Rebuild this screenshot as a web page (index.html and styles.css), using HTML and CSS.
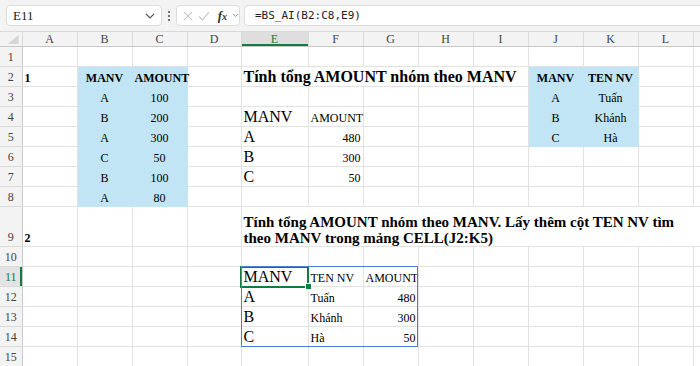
FILE: index.html
```html
<!DOCTYPE html>
<html lang="vi">
<head>
  <meta charset="UTF-8" />
  <title>BS_AI</title>
  <link rel="stylesheet" href="styles.css">
</head>
<body>

<div class="formula-bar">
  <div class="name-box">
    <span>E11</span>
    <svg class="chev" width="10" height="6" viewBox="0 0 10 6"><path d="M1 1l4 4 4-4" fill="none" stroke="#555" stroke-width="1.1"/></svg>
  </div>
  <div class="grip">
    <svg width="4" height="12" viewBox="0 0 4 12"><circle cx="2" cy="2" r="1.1" fill="#555"/><circle cx="2" cy="6" r="1.1" fill="#555"/><circle cx="2" cy="10" r="1.1" fill="#555"/></svg>
  </div>
  <div class="fx-box">
    <svg width="10" height="10" viewBox="0 0 10 10"><path d="M1 1l8 8M9 1l-8 8" stroke="#c4c4c4" stroke-width="1.1"/></svg>
    <svg width="12" height="10" viewBox="0 0 12 10"><path d="M1 5.5l3.5 3.5 6.5-8" fill="none" stroke="#c4c4c4" stroke-width="1.1"/></svg>
    <span class="fx">f<small>x</small></span>
    <svg width="7" height="5" viewBox="0 0 7 5"><path d="M1 1l2.5 2.5 2.5-2.5" fill="none" stroke="#888" stroke-width="1"/></svg>
  </div>
  <div class="formula">=BS_AI(B2:C8,E9)</div>
</div>

<table class="sheet">
  <colgroup>
    <col class="w-rh"><col class="w-c"><col class="w-c"><col class="w-c"><col class="w-d"><col class="w-e">
    <col class="w-c"><col class="w-c"><col class="w-c"><col class="w-c"><col class="w-c"><col class="w-c"><col class="w-c"><col class="w-m">
  </colgroup>
  <thead>
    <tr>
      <th class="corner"><div class="tri"></div></th>
      <th>A</th><th>B</th><th>C</th><th>D</th><th class="sel-col">E</th><th>F</th><th>G</th><th>H</th><th>I</th><th>J</th><th>K</th><th>L</th><th></th>
    </tr>
  </thead>
  <tbody>
    <tr>
      <th>1</th><td></td><td></td><td></td><td></td><td></td><td></td><td></td><td></td><td></td><td></td><td></td><td></td><td></td>
    </tr>
    <tr>
      <th>2</th><td class="bold">1</td><td class="blue bold c">MANV</td><td class="blue bold c">AMOUNT</td><td></td>
      <td colspan="5" class="title">Tính tổng AMOUNT nhóm theo MANV</td>
      <td class="blue bold c">MANV</td><td class="blue bold c">TEN NV</td><td></td><td></td>
    </tr>
    <tr>
      <th>3</th><td></td><td class="blue c">A</td><td class="blue c">100</td><td></td><td></td><td></td><td></td><td></td><td></td>
      <td class="blue c">A</td><td class="blue c">Tuấn</td><td></td><td></td>
    </tr>
    <tr>
      <th>4</th><td></td><td class="blue c">B</td><td class="blue c">200</td><td></td><td class="big">MANV</td><td>AMOUNT</td><td></td><td></td><td></td>
      <td class="blue c">B</td><td class="blue c">Khánh</td><td></td><td></td>
    </tr>
    <tr>
      <th>5</th><td></td><td class="blue c">A</td><td class="blue c">300</td><td></td><td class="big">A</td><td class="r">480</td><td></td><td></td><td></td>
      <td class="blue c">C</td><td class="blue c">Hà</td><td></td><td></td>
    </tr>
    <tr>
      <th>6</th><td></td><td class="blue c">C</td><td class="blue c">50</td><td></td><td class="big">B</td><td class="r">300</td><td></td><td></td><td></td><td></td><td></td><td></td><td></td>
    </tr>
    <tr>
      <th>7</th><td></td><td class="blue c">B</td><td class="blue c">100</td><td></td><td class="big">C</td><td class="r">50</td><td></td><td></td><td></td><td></td><td></td><td></td><td></td>
    </tr>
    <tr>
      <th>8</th><td></td><td class="blue c">A</td><td class="blue c">80</td><td></td><td></td><td></td><td></td><td></td><td></td><td></td><td></td><td></td><td></td>
    </tr>
    <tr class="tall">
      <th>9</th><td class="bold">2</td><td></td><td></td><td></td>
      <td colspan="9" class="title2">Tính tổng AMOUNT nhóm theo MANV. Lấy thêm cột TEN NV tìm<br>theo MANV trong mảng CELL(J2:K5)</td>
    </tr>
    <tr>
      <th>10</th><td></td><td></td><td></td><td></td><td></td><td></td><td></td><td></td><td></td><td></td><td></td><td></td><td></td>
    </tr>
    <tr>
      <th class="sel-row">11</th><td></td><td></td><td></td><td></td>
      <td class="big active">MANV<span class="spill"></span></td><td>TEN NV</td><td>AMOUNT</td><td></td><td></td><td></td><td></td><td></td><td></td>
    </tr>
    <tr>
      <th>12</th><td></td><td></td><td></td><td></td><td class="big">A</td><td>Tuấn</td><td class="r">480</td><td></td><td></td><td></td><td></td><td></td><td></td>
    </tr>
    <tr>
      <th>13</th><td></td><td></td><td></td><td></td><td class="big">B</td><td>Khánh</td><td class="r">300</td><td></td><td></td><td></td><td></td><td></td><td></td>
    </tr>
    <tr>
      <th>14</th><td></td><td></td><td></td><td></td><td class="big">C</td><td>Hà</td><td class="r">50</td><td></td><td></td><td></td><td></td><td></td><td></td>
    </tr>
    <tr>
      <th>15</th><td></td><td></td><td></td><td></td><td></td><td></td><td></td><td></td><td></td><td></td><td></td><td></td><td></td>
    </tr>
  </tbody>
</table>

</body>
</html>
```

FILE: styles.css
```css
body { margin: 0; background: #fff; overflow: hidden; font-family: "Liberation Serif", serif; }

/* formula bar */
.formula-bar { height: 31px; box-sizing: border-box; padding: 5px 0 5px 6px; background: #f3f3f3; display: flex; align-items: stretch; }
.name-box { width: 156px; box-sizing: border-box; background: #fff; border: 1px solid #dcdcdc; border-radius: 4px; display: flex; align-items: center; justify-content: space-between; padding: 0 6px 0 6px; font-size: 13px; color: #222; }
.grip { width: 14px; display: flex; align-items: center; justify-content: center; }
.fx-box { width: 64px; box-sizing: border-box; background: #fff; border: 1px solid #dcdcdc; border-radius: 4px; display: flex; align-items: center; gap: 5px; padding-left: 6px; }
.fx { font-style: italic; font-weight: bold; font-size: 13px; color: #333; margin-left: 3px; }
.fx small { font-size: 10px; }
.formula { flex: 1; margin-left: 4px; margin-right: -4px; background: #fff; border: 1px solid #dcdcdc; border-radius: 4px; font-family: "DejaVu Sans Mono", monospace; font-size: 11px; color: #222; padding-left: 10px; display: flex; align-items: center; }

/* grid */
.sheet { border-collapse: collapse; table-layout: fixed; width: 700px; font-family: "Liberation Serif", serif; font-size: 12px; color: #000; }
.sheet th, .sheet td { box-sizing: border-box; }
.w-rh { width: 22px; }
.w-c { width: 55px; }
.w-d { width: 54px; }
.w-e { width: 67px; }
.w-m { width: 7px; }

.sheet th { background: #f3f3f3; font-family: "Liberation Serif", serif; font-weight: normal; color: #444; font-size: 12px; padding: 0; line-height: 13px; }
.sheet thead th { height: 15px; border-top: 1px solid #dadada; border-left: 1px solid #dadada; border-right: 1px solid #dadada; border-bottom: 1px solid #c8c8c8; text-align: center; }
.sheet tbody th { height: 20px; text-align: center; vertical-align: bottom; border-right: 1px solid #c8c8c8; border-bottom: 1px solid #dadada; padding-bottom: 2px; }
.sheet thead th.corner { position: relative; border-left: none; }
.tri { position: absolute; right: 3px; bottom: 2px; width: 11px; height: 9px; background: #d6d6d6; clip-path: polygon(100% 0, 100% 100%, 0 100%); }
.sheet thead th.sel-col { background: #dedede; color: #107c41; box-shadow: inset 0 -2px #107c41; }
.sheet tbody th.sel-row { background: #e3e3e3; color: #107c41; box-shadow: inset -2px 0 #107c41; }

.sheet td { height: 20px; border: 1px solid #e2e2e2; padding: 0 2px; vertical-align: bottom; line-height: 16px; white-space: nowrap; font-family: "Liberation Serif", serif; }
.sheet tr.tall td, .sheet tr.tall th { height: 40px; }

.blue { background: #c1e5f5; border-color: #c1e5f5 !important; }
.bold { font-weight: bold; }
.c { text-align: center; }
.r { text-align: right; }
.big { font-size: 16px; line-height: 18px; padding-bottom: 1px !important; }
.title { font-size: 16px; font-weight: bold; line-height: 18px; padding-bottom: 1px !important; }
.title2 { font-size: 15px; font-weight: bold; line-height: 19px; white-space: normal !important; }

.active { position: relative; outline: 2px solid #107c41; outline-offset: -1px; }
.active::after { content: ""; position: absolute; right: -4px; bottom: -4px; width: 5px; height: 5px; background: #107c41; border: 1px solid #fff; z-index: 2; }
.spill { position: absolute; left: -1px; top: -1px; width: 177px; height: 81px; box-sizing: border-box; border: 1px solid #4a7fe0; pointer-events: none; }
```
